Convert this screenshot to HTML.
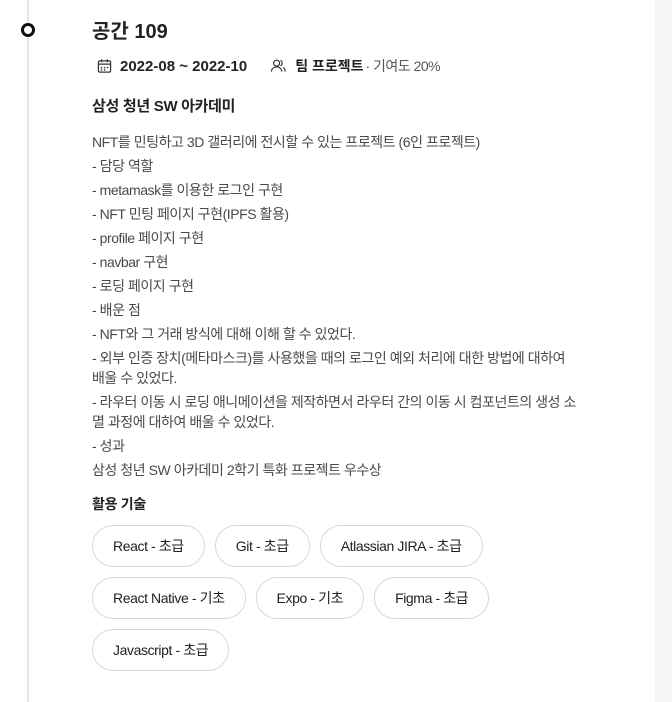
<!DOCTYPE html>
<html><head><meta charset="utf-8"><style>
*{margin:0;padding:0;box-sizing:border-box}
body{width:672px;height:702px;background:#fff;font-family:"Liberation Sans","Noto Sans CJK KR",sans-serif;position:relative;overflow:hidden;color:#222}
.strip{position:absolute;left:655px;top:0;width:17px;height:702px;background:#f5f5f5}
.line{position:absolute;left:27px;top:0;width:2px;height:702px;background:#e6e6e6}
.dot{position:absolute;left:21px;top:23px;width:14px;height:14px;border:3.5px solid #111;border-radius:50%;background:#fff}
.c{position:absolute;left:92px;top:0;width:475px}
h1{position:absolute;top:15px;font-size:20px;font-weight:bold;color:#222;white-space:nowrap}
.meta{position:absolute;top:56px;left:5px;font-size:14px;white-space:nowrap;display:flex;align-items:center}
.meta b{color:#222}
.meta b.d{font-size:15px}
.meta span.g{color:#555;margin-left:2px;letter-spacing:-0.5px}
h2{position:absolute;top:95px;font-size:15px;font-weight:bold;white-space:nowrap;letter-spacing:-0.3px}
.body{position:absolute;top:132px;width:520px;font-size:14px;color:#4a4a4a;letter-spacing:-0.45px}
.body p{line-height:20px;margin-bottom:4px;white-space:nowrap}
h3{position:absolute;top:494px;font-size:14px;font-weight:bold;letter-spacing:-0.3px}
.chips{position:absolute;top:525px;width:480px;display:flex;flex-wrap:wrap;gap:10px 10px}
.chip{height:42px;border:1px solid #d8d8d8;border-radius:21px;padding:0 20px;font-size:14px;color:#222;line-height:40px;white-space:nowrap;letter-spacing:-0.4px}
</style></head><body>
<div class="strip"></div>
<div class="line"></div>
<div class="dot"></div>
<div class="c">
<h1>공간 109</h1>
<div class="meta">
<svg width="15" height="16" viewBox="0 0 16 16" style="margin-right:8px"><rect x="1.5" y="2.5" width="13" height="12" rx="1.5" fill="none" stroke="#333" stroke-width="1.3"/><line x1="1.5" y1="6" x2="14.5" y2="6" stroke="#333" stroke-width="1.3"/><line x1="5" y1="1" x2="5" y2="4" stroke="#333" stroke-width="1.3"/><line x1="11" y1="1" x2="11" y2="4" stroke="#333" stroke-width="1.3"/><g fill="#333"><rect x="4" y="9" width="1.5" height="1.5"/><rect x="7.3" y="9" width="1.5" height="1.5"/><rect x="10.5" y="9" width="1.5" height="1.5"/><rect x="4" y="11.5" width="1.5" height="1.5"/><rect x="7.3" y="11.5" width="1.5" height="1.5"/></g></svg>
<b class="d">2022-08 ~ 2022-10</b>
<svg width="17" height="16" viewBox="0 0 18 16" style="margin:0 8px 0 23px"><circle cx="7" cy="5" r="3.2" fill="none" stroke="#333" stroke-width="1.2"/><path d="M1.5 14c0-3 2.5-5 5.5-5s5.5 2 5.5 5" fill="none" stroke="#333" stroke-width="1.2"/><path d="M11 2.2a3 3 0 0 1 0 5.6M14 9.5c1.3.8 2 2.5 2 4.5" fill="none" stroke="#333" stroke-width="1.2"/></svg>
<b>팀 프로젝트</b><span class="g">· 기여도 20%</span>
</div>
<h2>삼성 청년 SW 아카데미</h2>
<div class="body">
<p>NFT를 민팅하고 3D 갤러리에 전시할 수 있는 프로젝트 (6인 프로젝트)</p>
<p>- 담당 역할</p>
<p>- metamask를 이용한 로그인 구현</p>
<p>- NFT 민팅 페이지 구현(IPFS 활용)</p>
<p>- profile 페이지 구현</p>
<p>- navbar 구현</p>
<p>- 로딩 페이지 구현</p>
<p>- 배운 점</p>
<p>- NFT와 그 거래 방식에 대해 이해 할 수 있었다.</p>
<p>- 외부 인증 장치(메타마스크)를 사용했을 때의 로그인 예외 처리에 대한 방법에 대하여<br>배울 수 있었다.</p>
<p>- 라우터 이동 시 로딩 애니메이션을 제작하면서 라우터 간의 이동 시 컴포넌트의 생성 소<br>멸 과정에 대하여 배울 수 있었다.</p>
<p>- 성과</p>
<p>삼성 청년 SW 아카데미 2학기 특화 프로젝트 우수상</p>
</div>
<h3>활용 기술</h3>
<div class="chips">
<div class="chip">React - 초급</div><div class="chip">Git - 초급</div><div class="chip">Atlassian JIRA - 초급</div>
<div class="chip">React Native - 기초</div><div class="chip">Expo - 기초</div><div class="chip">Figma - 초급</div>
<div class="chip">Javascript - 초급</div>
</div>
</div>
</body></html>
